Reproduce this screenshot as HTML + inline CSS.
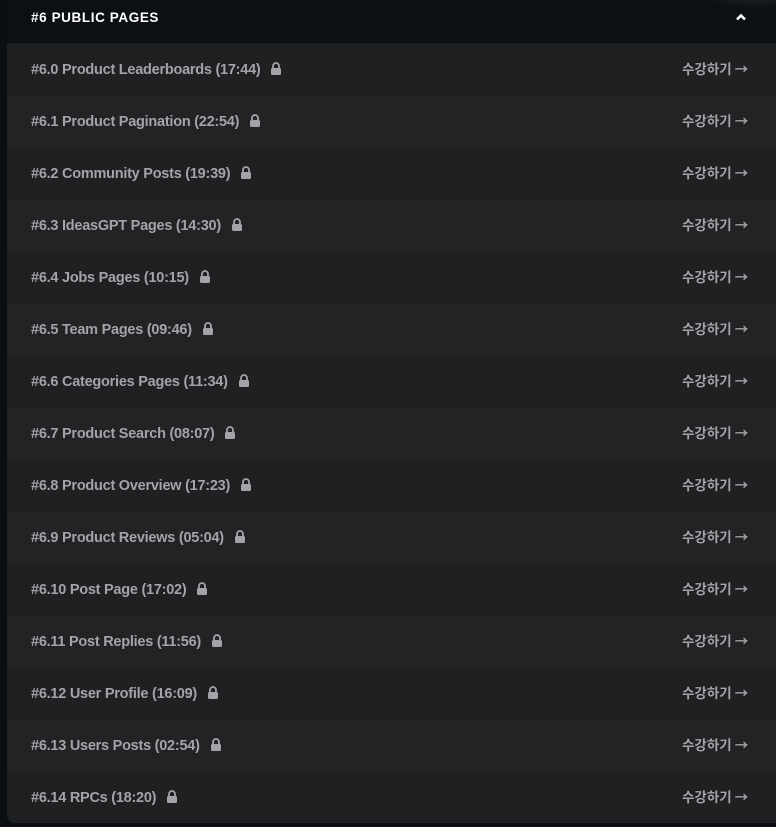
<!DOCTYPE html>
<html><head><meta charset="utf-8"><style>
html,body{margin:0;padding:0;background:#0b0e12;width:776px;height:827px;overflow:hidden;font-family:"Liberation Sans","Noto Sans CJK KR",sans-serif;}
.wrap{position:absolute;left:7px;top:0;width:780px;height:823px;border-radius:0 0 0 8px;overflow:hidden;background:#1e1f21;}
.head{height:43px;background:#0c0f13;position:relative;}
.head .t{position:absolute;left:24px;top:10px;color:#fff;font-weight:bold;font-size:13.5px;letter-spacing:0.6px;}
.head .c{position:absolute;left:727px;top:12px;}
.glow{position:absolute;left:690px;top:-30px;width:120px;height:40px;border-radius:50%;background:radial-gradient(ellipse,rgba(120,80,40,.35),rgba(40,80,80,.15) 50%,transparent 70%);}
.row{height:52px;position:relative;color:#a3a3a8;font-size:14.5px;font-weight:bold;}
.row:nth-child(odd){background:#1f2022}
.row:nth-child(even){background:#232325}
.row .l{position:absolute;left:24px;top:19px;white-space:nowrap;letter-spacing:-0.25px;}
.row .l svg{margin-left:10px;vertical-align:-1px}
.row .r{position:absolute;left:675px;top:15px;white-space:nowrap;font-family:"Noto Sans CJK KR",sans-serif;font-size:13.5px;}
</style></head><body>
<div class="wrap">
<div class="head"><div class="glow"></div><div class="t">#6 PUBLIC PAGES</div>
<svg class="c" width="14" height="10" viewBox="0 0 14 10"><path d="M3 7.5 L7 3.5 L11 7.5" stroke="#fff" stroke-width="2.6" fill="none"/></svg></div>
<div class="rows">
<div class="row"><span class="l">#6.0 Product Leaderboards (17:44)<svg width="12" height="13" viewBox="0 0 12 13"><path d="M3 6V4a3 3 0 0 1 6 0v2" stroke="#a3a3a8" stroke-width="1.8" fill="none"/><rect x="1" y="6" width="10" height="7" rx="1.5" fill="#a3a3a8"/></svg></span><span class="r">수강하기 →</span></div>
<div class="row"><span class="l">#6.1 Product Pagination (22:54)<svg width="12" height="13" viewBox="0 0 12 13"><path d="M3 6V4a3 3 0 0 1 6 0v2" stroke="#a3a3a8" stroke-width="1.8" fill="none"/><rect x="1" y="6" width="10" height="7" rx="1.5" fill="#a3a3a8"/></svg></span><span class="r">수강하기 →</span></div>
<div class="row"><span class="l">#6.2 Community Posts (19:39)<svg width="12" height="13" viewBox="0 0 12 13"><path d="M3 6V4a3 3 0 0 1 6 0v2" stroke="#a3a3a8" stroke-width="1.8" fill="none"/><rect x="1" y="6" width="10" height="7" rx="1.5" fill="#a3a3a8"/></svg></span><span class="r">수강하기 →</span></div>
<div class="row"><span class="l">#6.3 IdeasGPT Pages (14:30)<svg width="12" height="13" viewBox="0 0 12 13"><path d="M3 6V4a3 3 0 0 1 6 0v2" stroke="#a3a3a8" stroke-width="1.8" fill="none"/><rect x="1" y="6" width="10" height="7" rx="1.5" fill="#a3a3a8"/></svg></span><span class="r">수강하기 →</span></div>
<div class="row"><span class="l">#6.4 Jobs Pages (10:15)<svg width="12" height="13" viewBox="0 0 12 13"><path d="M3 6V4a3 3 0 0 1 6 0v2" stroke="#a3a3a8" stroke-width="1.8" fill="none"/><rect x="1" y="6" width="10" height="7" rx="1.5" fill="#a3a3a8"/></svg></span><span class="r">수강하기 →</span></div>
<div class="row"><span class="l">#6.5 Team Pages (09:46)<svg width="12" height="13" viewBox="0 0 12 13"><path d="M3 6V4a3 3 0 0 1 6 0v2" stroke="#a3a3a8" stroke-width="1.8" fill="none"/><rect x="1" y="6" width="10" height="7" rx="1.5" fill="#a3a3a8"/></svg></span><span class="r">수강하기 →</span></div>
<div class="row"><span class="l">#6.6 Categories Pages (11:34)<svg width="12" height="13" viewBox="0 0 12 13"><path d="M3 6V4a3 3 0 0 1 6 0v2" stroke="#a3a3a8" stroke-width="1.8" fill="none"/><rect x="1" y="6" width="10" height="7" rx="1.5" fill="#a3a3a8"/></svg></span><span class="r">수강하기 →</span></div>
<div class="row"><span class="l">#6.7 Product Search (08:07)<svg width="12" height="13" viewBox="0 0 12 13"><path d="M3 6V4a3 3 0 0 1 6 0v2" stroke="#a3a3a8" stroke-width="1.8" fill="none"/><rect x="1" y="6" width="10" height="7" rx="1.5" fill="#a3a3a8"/></svg></span><span class="r">수강하기 →</span></div>
<div class="row"><span class="l">#6.8 Product Overview (17:23)<svg width="12" height="13" viewBox="0 0 12 13"><path d="M3 6V4a3 3 0 0 1 6 0v2" stroke="#a3a3a8" stroke-width="1.8" fill="none"/><rect x="1" y="6" width="10" height="7" rx="1.5" fill="#a3a3a8"/></svg></span><span class="r">수강하기 →</span></div>
<div class="row"><span class="l">#6.9 Product Reviews (05:04)<svg width="12" height="13" viewBox="0 0 12 13"><path d="M3 6V4a3 3 0 0 1 6 0v2" stroke="#a3a3a8" stroke-width="1.8" fill="none"/><rect x="1" y="6" width="10" height="7" rx="1.5" fill="#a3a3a8"/></svg></span><span class="r">수강하기 →</span></div>
<div class="row"><span class="l">#6.10 Post Page (17:02)<svg width="12" height="13" viewBox="0 0 12 13"><path d="M3 6V4a3 3 0 0 1 6 0v2" stroke="#a3a3a8" stroke-width="1.8" fill="none"/><rect x="1" y="6" width="10" height="7" rx="1.5" fill="#a3a3a8"/></svg></span><span class="r">수강하기 →</span></div>
<div class="row"><span class="l">#6.11 Post Replies (11:56)<svg width="12" height="13" viewBox="0 0 12 13"><path d="M3 6V4a3 3 0 0 1 6 0v2" stroke="#a3a3a8" stroke-width="1.8" fill="none"/><rect x="1" y="6" width="10" height="7" rx="1.5" fill="#a3a3a8"/></svg></span><span class="r">수강하기 →</span></div>
<div class="row"><span class="l">#6.12 User Profile (16:09)<svg width="12" height="13" viewBox="0 0 12 13"><path d="M3 6V4a3 3 0 0 1 6 0v2" stroke="#a3a3a8" stroke-width="1.8" fill="none"/><rect x="1" y="6" width="10" height="7" rx="1.5" fill="#a3a3a8"/></svg></span><span class="r">수강하기 →</span></div>
<div class="row"><span class="l">#6.13 Users Posts (02:54)<svg width="12" height="13" viewBox="0 0 12 13"><path d="M3 6V4a3 3 0 0 1 6 0v2" stroke="#a3a3a8" stroke-width="1.8" fill="none"/><rect x="1" y="6" width="10" height="7" rx="1.5" fill="#a3a3a8"/></svg></span><span class="r">수강하기 →</span></div>
<div class="row"><span class="l">#6.14 RPCs (18:20)<svg width="12" height="13" viewBox="0 0 12 13"><path d="M3 6V4a3 3 0 0 1 6 0v2" stroke="#a3a3a8" stroke-width="1.8" fill="none"/><rect x="1" y="6" width="10" height="7" rx="1.5" fill="#a3a3a8"/></svg></span><span class="r">수강하기 →</span></div>
</div>
</div>
</body></html>
